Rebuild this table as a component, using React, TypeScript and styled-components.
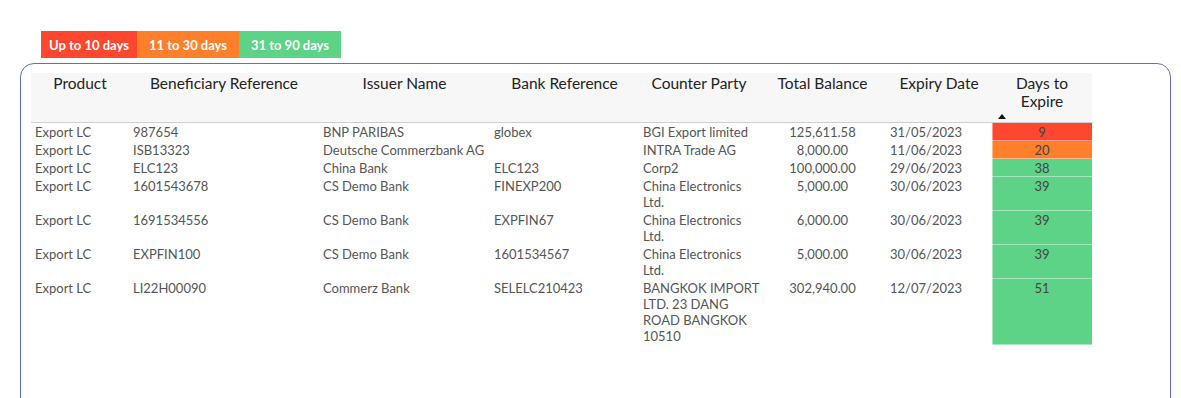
import { createGlobalStyle } from "styled-components";
import styled from "styled-components";

const GlobalStyle = createGlobalStyle`
  body {
    margin: 0;
    background: #ffffff;
    font-family: Lato, "Noto Sans", sans-serif;
  }
`;

const Page = styled.div`
  padding-top: 31px;
  width: 1181px;
  height: 398px;
  overflow: hidden;
`;

const Legend = styled.div`
  display: flex;
  margin-left: 41px;
`;

const LegendItem = styled.div<{ $color: string; $w: number }>`
  width: ${(p) => p.$w}px;
  background: ${(p) => p.$color};
  color: #ffffff;
  font-weight: 700;
  font-size: 13px;
  height: 27px;
  line-height: 28px;
  text-align: center;
`;

const Panel = styled.div`
  margin: 5px 10px 0 20px;
  border: 1.5px solid #5b6fcf;
  border-radius: 14px;
  padding: 9px 10px;
  min-height: 360px;
`;

const Table = styled.table`
  border-collapse: collapse;
  table-layout: fixed;
  width: 1061px;
`;

const HeadCell = styled.th<{ $w: number }>`
  box-sizing: border-box;
  width: ${(p) => p.$w}px;
  height: 49px;
  background: #f7f7f7;
  border-bottom: 1px solid #cfcfcf;
  color: #222222;
  font-weight: 400;
  font-size: 15.5px;
  line-height: 18px;
  text-align: center;
  vertical-align: top;
  padding: 1px 2px 0;
`;

const SortArrow = styled.span`
  display: block;
  width: 0;
  height: 0;
  margin: 4px 0 0 4px;
  border-left: 4.5px solid transparent;
  border-right: 4.5px solid transparent;
  border-bottom: 5px solid #111111;
`;

const Cell = styled.td<{ $align?: string }>`
  box-sizing: border-box;
  color: #555555;
  font-size: 13px;
  line-height: 16px;
  padding: 1px 4px 1px;
  vertical-align: top;
  white-space: pre;
  text-align: ${(p) => p.$align || "left"};
`;

const DaysCell = styled.td<{ $color: string }>`
  box-sizing: border-box;
  background: ${(p) => p.$color};
  border: 1px solid rgba(255, 255, 255, 0.45);
  color: #444444;
  font-size: 13px;
  line-height: 16px;
  padding: 1px 4px 0;
  vertical-align: top;
  text-align: center;
`;

const RED = "#ff462e";
const ORANGE = "#ff7f2a";
const GREEN = "#5cd387";

const legend = [
  { label: "Up to 10 days", color: RED, w: 96 },
  { label: "11 to 30 days", color: ORANGE, w: 102 },
  { label: "31 to 90 days", color: GREEN, w: 102 },
];

const columns = [
  { title: "Product", w: 98 },
  { title: "Beneficiary Reference", w: 190 },
  { title: "Issuer Name", w: 171 },
  { title: "Bank Reference", w: 149 },
  { title: "Counter Party", w: 120 },
  { title: "Total Balance", w: 127 },
  { title: "Expiry Date", w: 106 },
];

interface IRow {
  product: string;
  beneficiary: string;
  issuer: string;
  bankRef: string;
  counterParty: string;
  balance: string;
  expiry: string;
  days: number;
}

const rows: IRow[] = [
  { product: "Export LC", beneficiary: "987654", issuer: "BNP PARIBAS", bankRef: "globex", counterParty: "BGI Export limited", balance: "125,611.58", expiry: "31/05/2023", days: 9 },
  { product: "Export LC", beneficiary: "ISB13323", issuer: "Deutsche Commerzbank AG", bankRef: "", counterParty: "INTRA Trade AG", balance: "8,000.00", expiry: "11/06/2023", days: 20 },
  { product: "Export LC", beneficiary: "ELC123", issuer: "China Bank", bankRef: "ELC123", counterParty: "Corp2", balance: "100,000.00", expiry: "29/06/2023", days: 38 },
  { product: "Export LC", beneficiary: "1601543678", issuer: "CS Demo Bank", bankRef: "FINEXP200", counterParty: "China Electronics\nLtd.", balance: "5,000.00", expiry: "30/06/2023", days: 39 },
  { product: "Export LC", beneficiary: "1691534556", issuer: "CS Demo Bank", bankRef: "EXPFIN67", counterParty: "China Electronics\nLtd.", balance: "6,000.00", expiry: "30/06/2023", days: 39 },
  { product: "Export LC", beneficiary: "EXPFIN100", issuer: "CS Demo Bank", bankRef: "1601534567", counterParty: "China Electronics\nLtd.", balance: "5,000.00", expiry: "30/06/2023", days: 39 },
  { product: "Export LC", beneficiary: "LI22H00090", issuer: "Commerz Bank", bankRef: "SELELC210423", counterParty: "BANGKOK IMPORT\nLTD. 23 DANG\nROAD BANGKOK\n10510", balance: "302,940.00", expiry: "12/07/2023", days: 51 },
];

const dayColor = (d: number) => (d <= 10 ? RED : d <= 30 ? ORANGE : GREEN);

export default function App() {
  return (
    <>
      <GlobalStyle />
      <Page>
        <Legend>
          {legend.map((l) => (
            <LegendItem key={l.label} $color={l.color} $w={l.w}>
              {l.label}
            </LegendItem>
          ))}
        </Legend>
        <Panel>
          <Table>
            <thead>
              <tr>
                {columns.map((c) => (
                  <HeadCell key={c.title} $w={c.w}>
                    {c.title}
                  </HeadCell>
                ))}
                <HeadCell $w={100}>
                  Days to
                  <br />
                  Expire
                  <SortArrow />
                </HeadCell>
              </tr>
            </thead>
            <tbody>
              {rows.map((r, i) => (
                <tr key={i}>
                  <Cell>{r.product}</Cell>
                  <Cell>{r.beneficiary}</Cell>
                  <Cell>{r.issuer}</Cell>
                  <Cell>{r.bankRef}</Cell>
                  <Cell>{r.counterParty}</Cell>
                  <Cell $align="center">{r.balance}</Cell>
                  <Cell>{r.expiry}</Cell>
                  <DaysCell $color={dayColor(r.days)}>{r.days}</DaysCell>
                </tr>
              ))}
            </tbody>
          </Table>
        </Panel>
      </Page>
    </>
  );
}
